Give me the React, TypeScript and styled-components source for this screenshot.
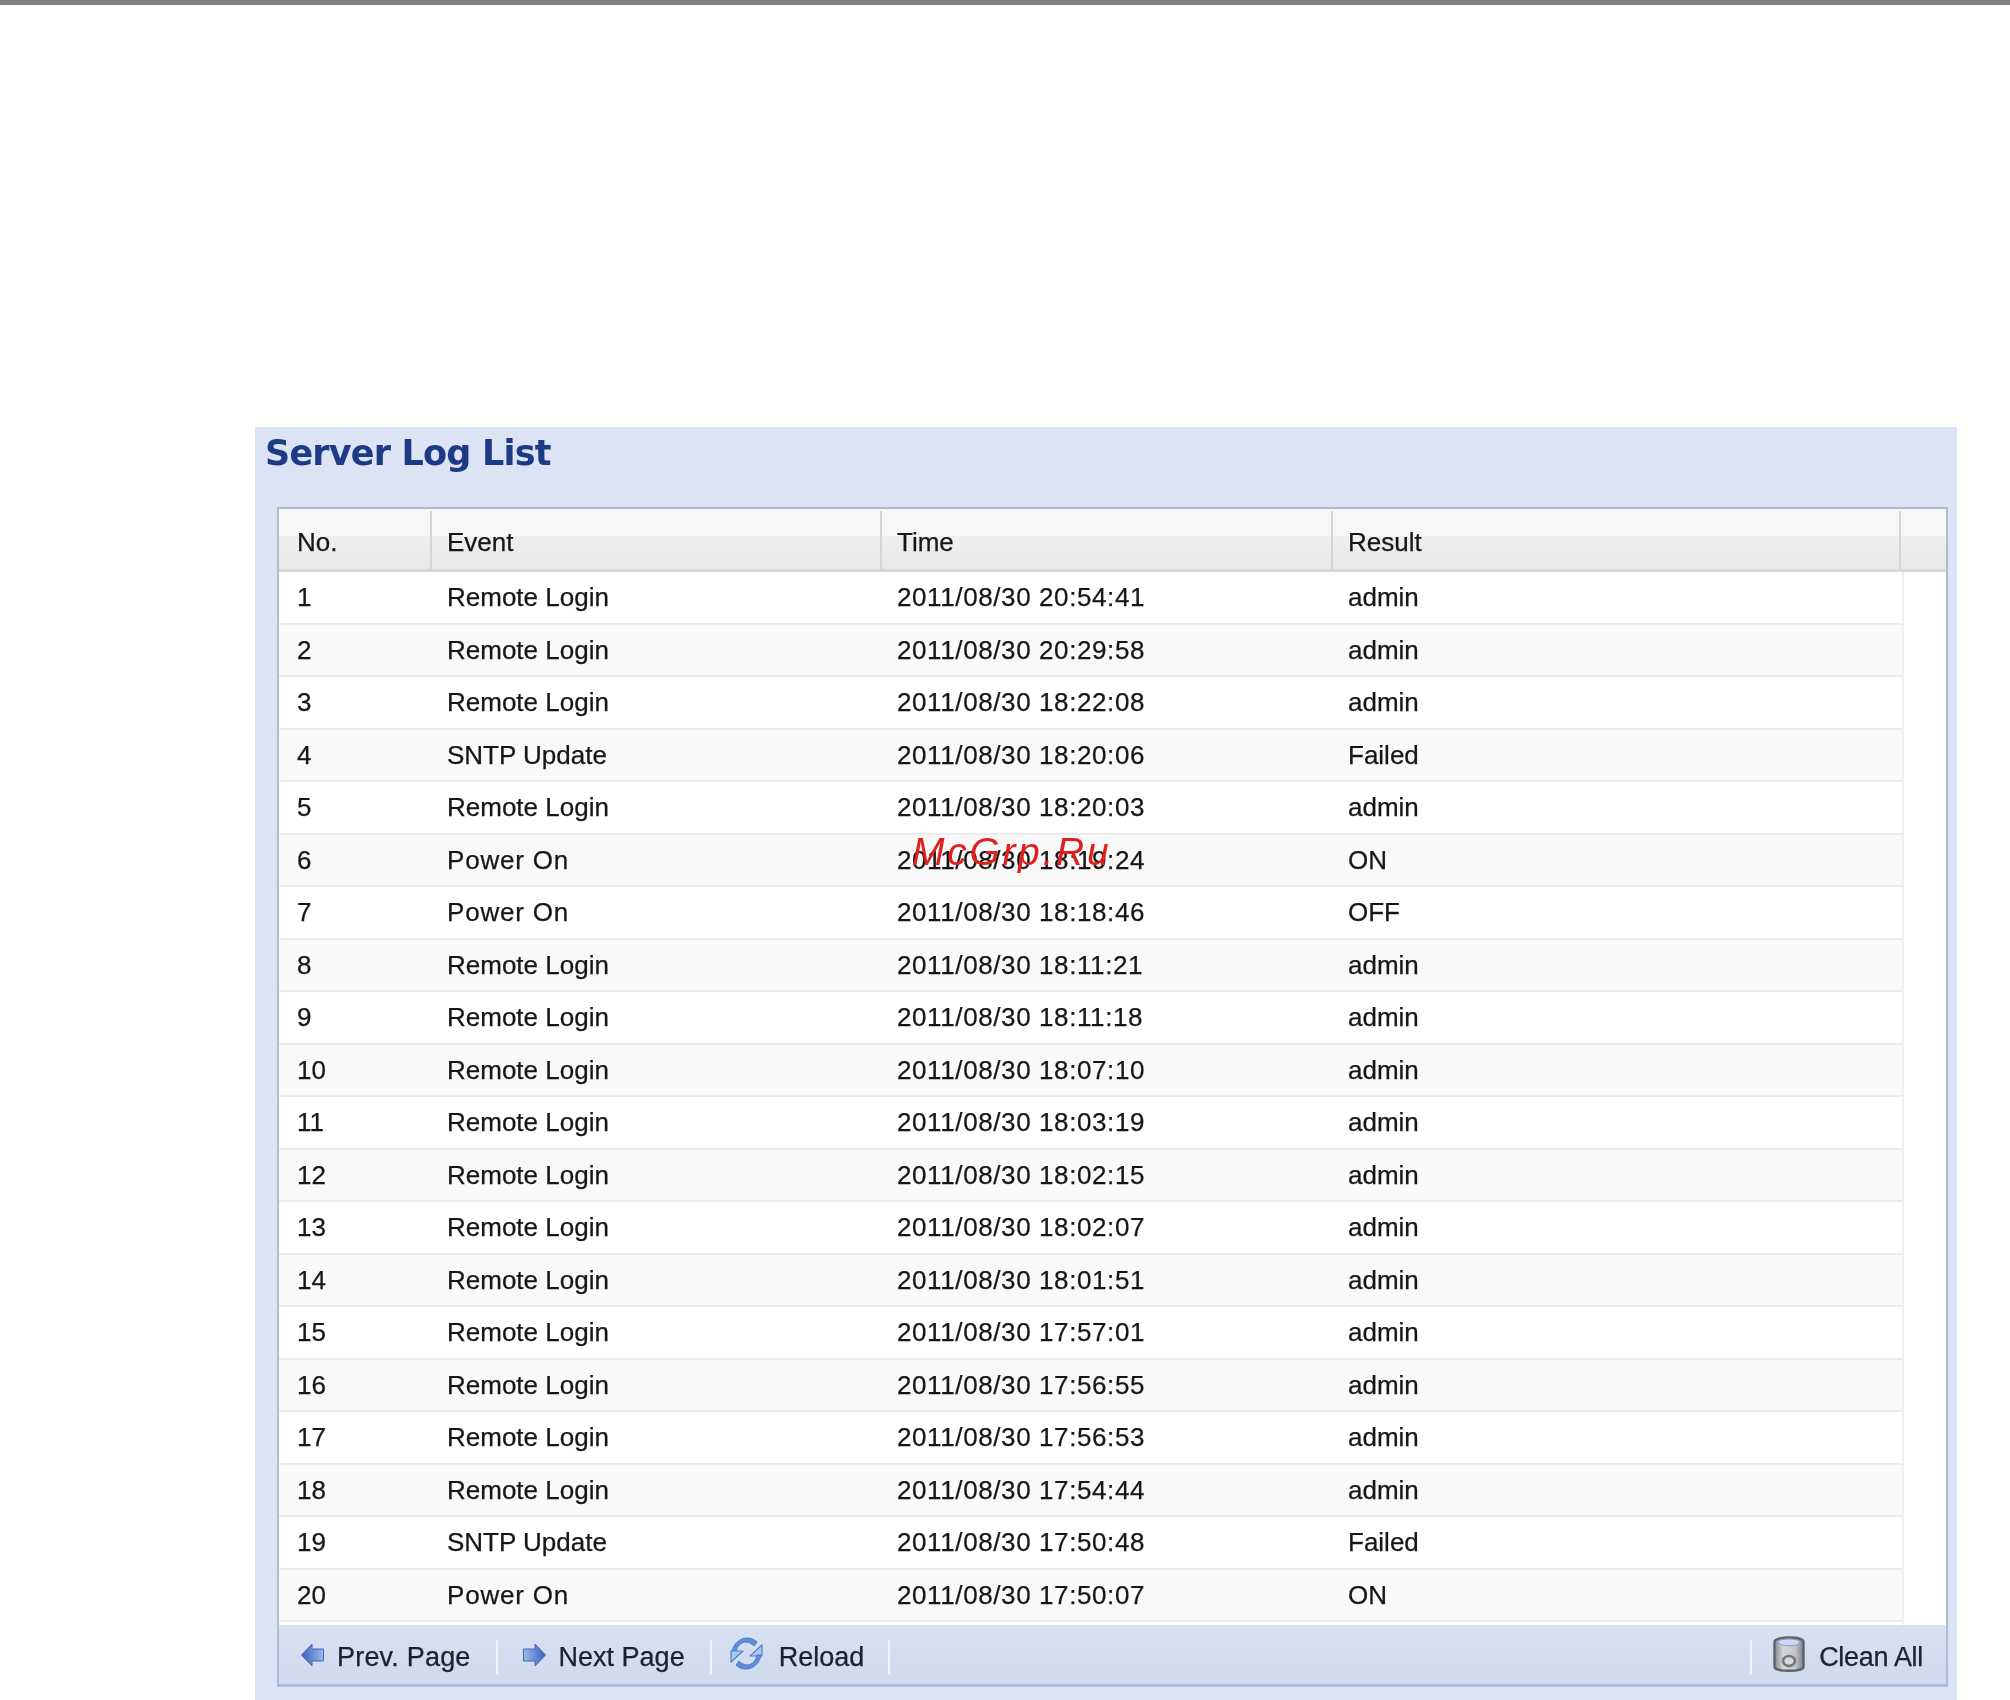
import React from 'react';
import styled, { createGlobalStyle } from 'styled-components';

const GlobalStyle = createGlobalStyle`
	html, body {
		margin: 0;
		padding: 0;
		background: #fff;
	}
	body {
		width: 2010px;
		height: 1700px;
		overflow: hidden;
		font-family: 'Liberation Sans', Arial, sans-serif;
	}
`;

const Page = styled.div`
	position: relative;
	width: 2010px;
	height: 1700px;
	overflow: hidden;
	filter: blur(0.7px);
`;

const TopRule = styled.div`
	height: 5px;
	background: #808080;
`;

const Panel = styled.section`
	box-sizing: border-box;
	width: 1702px;
	height: 1273px;
	margin: 422px 0 0 255px;
	padding: 0 9px 0 22px;
	background: #dce3f5;
`;

const Title = styled.h2`
	margin: 0 0 0 -12px;
	height: 80px;
	padding-top: 3px;
	box-sizing: border-box;
	font-family: 'DejaVu Sans', Verdana, sans-serif;
	font-size: 35px;
	line-height: 46px;
	font-weight: 700;
	letter-spacing: -0.8px;
	color: #1c3a85;
`;

const Grid = styled.div`
	box-sizing: border-box;
	width: 1671px;
	border: 2px solid #b4b9c4;
	border-bottom: 0;
	background: #fff;
	font-size: 26px;
	color: #161616;
	-webkit-text-stroke: 0.25px #161616;
`;

const HeaderRow = styled.div`
	display: grid;
	grid-template-columns: 153px 450px 451px 568px 45px;
	height: 63px;
	box-sizing: border-box;
	border-bottom: 3px solid #d8d8d8;
	background: linear-gradient(#f7f7f7 0, #f7f7f7 27px, #efefef 27px, #e8e8e8 100%);
`;

const HeaderCell = styled.div<{ $first?: boolean }>`
	box-sizing: border-box;
	margin-top: 2px;
	padding: 16px 0 0 ${(p) => (p.$first ? 18 : 15)}px;
	border-right: 2px solid #d4d4d4;
	line-height: 30px;

	&:last-child {
		border-right: 0;
	}
`;

const Body = styled.div`
	width: 1623px;
	height: 1053px;
	border-right: 2px solid #f0f0f0;
`;

const Row = styled.div<{ $odd: boolean }>`
	display: grid;
	grid-template-columns: 153px 450px 451px 569px;
	box-sizing: border-box;
	height: 52.5px;
	border-bottom: 2px solid #ececec;
	background: ${(p) => (p.$odd ? '#fff' : '#f9f9f9')};
	line-height: 50px;
`;

const Cell = styled.div<{ $first?: boolean; $spread?: number }>`
	padding-left: ${(p) => (p.$first ? 18 : 15)}px;
	letter-spacing: ${(p) => p.$spread ?? 0}px;
`;

const Footer = styled.div`
	display: flex;
	align-items: center;
	box-sizing: border-box;
	height: 62px;
	width: 1671px;
	margin-left: -2px;
	padding: 5px 23px 0 22px;
	border-left: 2px solid #a9bde0;
	border-right: 2px solid #a9bde0;
	border-bottom: 3px solid #a9bde0;
	background: linear-gradient(#d8e1f2, #cfdaed);
	font-size: 27px;
	color: #1d2230;
`;

const ToolButton = styled.div<{ $gap: number; $spread?: number }>`
	display: flex;
	align-items: center;
	gap: ${(p) => p.$gap}px;
	height: 36px;
	letter-spacing: ${(p) => p.$spread ?? 0}px;
`;

const IconSvg = styled.svg<{ $lift: number; $flip?: boolean }>`
	flex: none;
	margin-bottom: ${(p) => p.$lift * 2}px;
	transform: ${(p) => (p.$flip ? 'scaleX(-1)' : 'none')};
`;

const Separator = styled.div<{ $margin: string }>`
	width: 2px;
	height: 34px;
	margin: ${(p) => p.$margin};
	background: #f2f6fc;
`;

const Spacer = styled.div`
	flex: 1;
`;

const Watermark = styled.div`
	position: absolute;
	left: 912px;
	top: 829px;
	font-size: 39px;
	line-height: 46px;
	font-style: italic;
	letter-spacing: 2.7px;
	color: #e0201c;
`;

const ArrowIcon = ({ flip }: { flip?: boolean }) => (
	<IconSvg $lift={2} $flip={flip} width="23" height="24" viewBox="0 0 23 24">
		<defs>
			<linearGradient id="arrowFill" x1="0" y1="0" x2="1" y2="0">
				<stop offset="0" stopColor="#3d5fb6" />
				<stop offset="0.55" stopColor="#6f90d8" />
				<stop offset="1" stopColor="#9db8ea" />
			</linearGradient>
		</defs>
		<path d="M0.5 12 L11 1 V6 H22.5 V18 H11 V23 Z" fill="url(#arrowFill)" stroke="#4767b8" strokeWidth="1" strokeLinejoin="round" />
	</IconSvg>
);

const reloadArc = 'M2 15 C3 7 10 1 17 1 C21 1 24 2 27 5 L24 9 C22 7 19 5 16 5 C11 5 7 9 6 15 Z';
const reloadHead = 'M32 8 V19 H20 Z';

const ReloadIcon = () => (
	<IconSvg $lift={3.5} width="33" height="33" viewBox="0 0 33 33">
		<path d={reloadArc} fill="#5f8ed8" stroke="#4a7dce" strokeWidth="1" />
		<path d={reloadHead} fill="#a9c8f2" stroke="#4f80cf" strokeWidth="1.2" strokeLinejoin="round" />
		<g transform="rotate(180 16.5 16.5)">
			<path d={reloadArc} fill="#5f8ed8" stroke="#4a7dce" strokeWidth="1" />
			<path d={reloadHead} fill="#a9c8f2" stroke="#4f80cf" strokeWidth="1.2" strokeLinejoin="round" />
		</g>
	</IconSvg>
);

const CanIcon = () => (
	<IconSvg $lift={3.5} width="32" height="39" viewBox="0 0 32 39" fill="none">
		<defs>
			<linearGradient id="canFill" x1="0" y1="0" x2="1" y2="0">
				<stop offset="0" stopColor="#85888e" />
				<stop offset="0.3" stopColor="#d6d8db" />
				<stop offset="0.7" stopColor="#c6c8cc" />
				<stop offset="1" stopColor="#7d8086" />
			</linearGradient>
		</defs>
		<path d="M1.5 8 C1.5 2 30.5 2 30.5 8 V33 C30.5 38 1.5 38 1.5 33 Z" fill="url(#canFill)" stroke="#5f646c" strokeWidth="2.4" />
		<path d="M5 8 C5 4 27 4 27 8 C27 13 5 13 5 8 Z" fill="#c8daf6" stroke="#8c98ac" strokeWidth="1" />
		<ellipse cx="16" cy="27" rx="6" ry="5" fill="#d8dadd" stroke="#74787f" strokeWidth="2.6" />
	</IconSvg>
);

type LogRow = [string, string, string];

const log: LogRow[] = [
	['Remote Login', '20:54:41', 'admin'],
	['Remote Login', '20:29:58', 'admin'],
	['Remote Login', '18:22:08', 'admin'],
	['SNTP Update', '18:20:06', 'Failed'],
	['Remote Login', '18:20:03', 'admin'],
	['Power On', '18:19:24', 'ON'],
	['Power On', '18:18:46', 'OFF'],
	['Remote Login', '18:11:21', 'admin'],
	['Remote Login', '18:11:18', 'admin'],
	['Remote Login', '18:07:10', 'admin'],
	['Remote Login', '18:03:19', 'admin'],
	['Remote Login', '18:02:15', 'admin'],
	['Remote Login', '18:02:07', 'admin'],
	['Remote Login', '18:01:51', 'admin'],
	['Remote Login', '17:57:01', 'admin'],
	['Remote Login', '17:56:55', 'admin'],
	['Remote Login', '17:56:53', 'admin'],
	['Remote Login', '17:54:44', 'admin'],
	['SNTP Update', '17:50:48', 'Failed'],
	['Power On', '17:50:07', 'ON'],
];

export default function App() {
	return (
		<Page>
			<GlobalStyle />
			<TopRule />
			<Panel>
				<Title>Server Log List</Title>
				<Grid>
					<HeaderRow>
						<HeaderCell $first>No.</HeaderCell>
						<HeaderCell>Event</HeaderCell>
						<HeaderCell>Time</HeaderCell>
						<HeaderCell>Result</HeaderCell>
						<HeaderCell />
					</HeaderRow>
					<Body>
						{log.map(([event, time, result], i) => (
							<Row key={i} $odd={i % 2 === 0}>
								<Cell $first>{i + 1}</Cell>
								<Cell $spread={event === 'Power On' ? 0.8 : 0}>{event}</Cell>
								<Cell $spread={0.6}>2011/08/30 {time}</Cell>
								<Cell>{result}</Cell>
							</Row>
						))}
					</Body>
					<Footer>
						<ToolButton $gap={13} $spread={0.2}>
							<ArrowIcon />
							Prev. Page
						</ToolButton>
						<Separator $margin="0 25px 0 25px" />
						<ToolButton $gap={13}>
							<ArrowIcon flip />
							Next Page
						</ToolButton>
						<Separator $margin="0 18px 0 25px" />
						<ToolButton $gap={16}>
							<ReloadIcon />
							Reload
						</ToolButton>
						<Separator $margin="0 0 0 24px" />
						<Spacer />
						<Separator $margin="0 21px 0 0" />
						<ToolButton $gap={14} $spread={-0.3}>
							<CanIcon />
							Clean All
						</ToolButton>
					</Footer>
				</Grid>
			</Panel>
			<Watermark>McGrp.Ru</Watermark>
		</Page>
	);
}
